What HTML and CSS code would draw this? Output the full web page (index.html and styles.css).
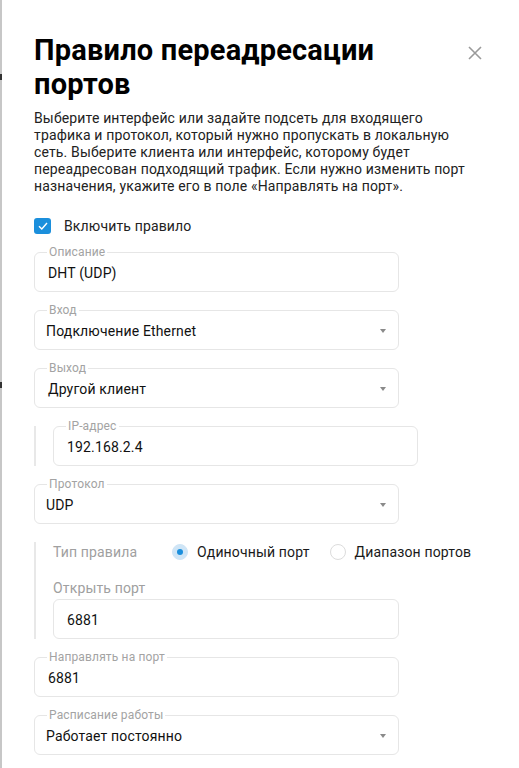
FILE: index.html
```html
<!DOCTYPE html>
<html lang="ru">
<head>
<meta charset="utf-8">
<title>Правило переадресации портов</title>
<link rel="stylesheet" href="styles.css">
</head>
<body>
<div class="page">
  <div class="edge"><span class="mark mark-a"></span><span class="mark mark-b"></span></div>
  <main class="panel">
    <div class="head">
      <h1 class="title">Правило переадресации портов</h1>
      <button class="close" aria-label="Закрыть">
        <svg width="14" height="14" viewBox="0 0 14 14"><path d="M1 1L13 13M13 1L1 13" stroke="#9a9a9a" stroke-width="1.6" fill="none"/></svg>
      </button>
    </div>
    <p class="desc">Выберите интерфейс или задайте подсеть для входящего трафика и протокол, который нужно пропускать в локальную сеть. Выберите клиента или интерфейс, которому будет переадресован подходящий трафик. Если нужно изменить порт назначения, укажите его в поле «Направлять на порт».</p>

    <label class="check-row">
      <span class="checkbox"><svg width="10" height="8" viewBox="0 0 10 8"><path d="M1 4.2L3.8 7L9 1" stroke="#fff" stroke-width="1.4" fill="none"/></svg></span>
      <span class="check-label">Включить правило</span>
    </label>

    <div class="form">
      <div class="field input"><span class="flabel">Описание</span><span class="value">DHT (UDP)</span></div>
      <div class="field select"><span class="flabel">Вход</span><span class="value">Подключение Ethernet</span><span class="arrow"></span></div>
      <div class="field input"><span class="flabel">Выход</span><span class="value">Другой клиент</span><span class="arrow"></span></div>
      <div class="sub">
        <div class="field input"><span class="flabel">IP-адрес</span><span class="value">192.168.2.4</span></div>
      </div>
      <div class="field select"><span class="flabel">Протокол</span><span class="value">UDP</span><span class="arrow"></span></div>
      <div class="sub sub-rule">
        <div class="radio-row">
          <span class="rlabel">Тип правила</span>
          <span class="radio on"></span><span class="ropt">Одиночный порт</span>
          <span class="radio"></span><span class="ropt">Диапазон портов</span>
        </div>
        <div class="plain-label">Открыть порт</div>
        <div class="field input wide"><span class="value">6881</span></div>
      </div>
      <div class="field input"><span class="flabel">Направлять на порт</span><span class="value">6881</span></div>
      <div class="field select"><span class="flabel">Расписание работы</span><span class="value">Работает постоянно</span><span class="arrow"></span></div>
    </div>
  </main>
</div>
</body>
</html>
```
FILE: styles.css
```css
* { box-sizing: border-box; }
html, body { margin: 0; padding: 0; background: #fff; }
body { font-family: Roboto, "Noto Sans", Arial, sans-serif; color: #1a1a1a; letter-spacing: 0.15px; }

.page { display: flex; min-height: 768px; }
.edge { width: 2px; background: #c7c7c7; position: relative; flex: none; }
.mark { position: absolute; left: 0; width: 2px; height: 6px; background: #333; }
.mark-a { top: 74px; }
.mark-b { top: 382px; }

.panel { flex: 1; padding: 33px 35px 0 32px; }

.head { display: flex; align-items: flex-start; justify-content: space-between; }
.title { margin: 0; font-size: 29px; line-height: 34px; font-weight: 700; color: #000; max-width: 380px; letter-spacing: 0.2px; }
.close { border: 0; background: none; padding: 0; margin: 13px 2px 0 0; width: 14px; height: 14px; display: block; }
.close svg { display: block; }

.desc { margin: 9px 0 0; font-size: 14px; line-height: 17px; color: #222; max-width: 442px; }

.check-row { display: flex; align-items: center; margin-top: 23px; height: 16px; gap: 13px; }
.checkbox { width: 17px; height: 16px; border-radius: 3px; background: #1b8fdc; display: flex; align-items: center; justify-content: center; }
.check-label { font-size: 14px; color: #222; }

.form { display: flex; flex-direction: column; gap: 18px; margin-top: 18px; }

.field { position: relative; width: 365px; height: 40px; border: 1px solid #e6e6e6; border-radius: 6px; display: flex; align-items: center; padding: 2px 13px 0; flex: none; }
.field.select { padding-left: 11px; }
.field.wide { width: auto; }
.flabel { position: absolute; left: 12px; top: -8px; padding: 0 2px; background: #fff; font-size: 12px; line-height: 14px; color: #a3a3a3; }
.value { font-size: 14px; color: #111; }
.arrow { position: absolute; right: 12px; top: 18px; width: 0; height: 0; border-left: 3px solid transparent; border-right: 3px solid transparent; border-top: 4px solid #8a8a8a; }

.sub { border-left: 2px solid #e8e8e8; padding-left: 17px; display: flex; flex-direction: column; }
.sub-rule { width: 365px; }

.radio-row { display: flex; align-items: center; height: 20px; font-size: 14px; white-space: nowrap; }
.rlabel { width: 119px; flex: none; color: #a0a0a0; }
.radio { width: 16px; height: 16px; border-radius: 50%; border: 1px solid #dcdcdc; background: #fff; position: relative; flex: none; }
.radio.on { border-color: #cfe5f6; background: #cfe5f6; }
.radio.on::after { content: ""; position: absolute; left: 4px; top: 4px; width: 6px; height: 6px; border-radius: 50%; background: #1b8fdc; }
.ropt { margin-left: 9px; color: #1a1a1a; margin-right: 20px; flex: none; }

.plain-label { margin-top: 18px; font-size: 14px; line-height: 17px; color: #a0a0a0; }
.sub-rule .field { margin-top: 2px; }
```
